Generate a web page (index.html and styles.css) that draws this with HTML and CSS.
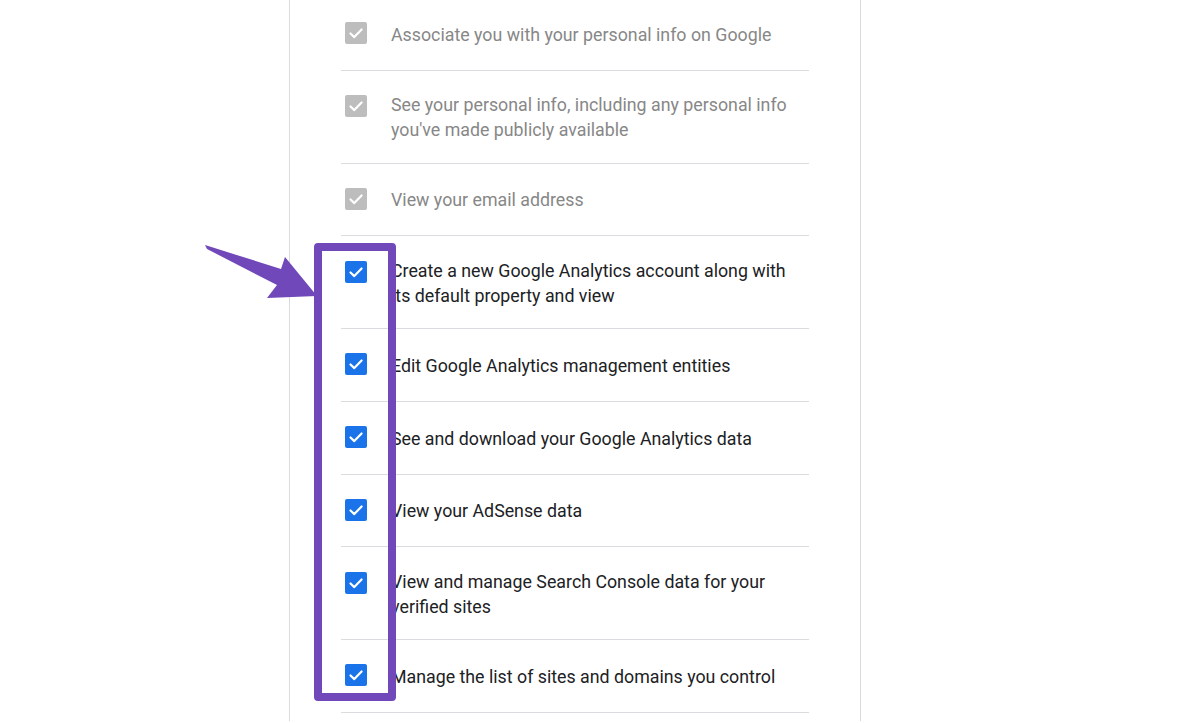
FILE: index.html
```html
<!DOCTYPE html>
<html lang="en">

<head>
    <meta charset="UTF-8">
    <meta name="viewport" content="width=device-width, initial-scale=1.0">
    <title>Permissions</title>
    <link rel="stylesheet" href="styles.css">
</head>

<body>
    <div class="card">
        <ul class="scopes">
            <li class="scope granted">
                <span class="box"><svg viewBox="0 0 22 22"><path d="M5.5 11.5l3.8 3.6 7.3-7.6" /></svg></span>
                <span class="label">Associate you with your personal info on Google</span>
            </li>
            <li class="scope granted">
                <span class="box"><svg viewBox="0 0 22 22"><path d="M5.5 11.5l3.8 3.6 7.3-7.6" /></svg></span>
                <span class="label">See your personal info, including any personal info you've made publicly available</span>
            </li>
            <li class="scope granted">
                <span class="box"><svg viewBox="0 0 22 22"><path d="M5.5 11.5l3.8 3.6 7.3-7.6" /></svg></span>
                <span class="label">View your email address</span>
            </li>
            <li class="scope">
                <span class="box"><svg viewBox="0 0 22 22"><path d="M5.5 11.5l3.8 3.6 7.3-7.6" /></svg></span>
                <span class="label">Create a new Google Analytics account along with its default property and view</span>
            </li>
            <li class="scope">
                <span class="box"><svg viewBox="0 0 22 22"><path d="M5.5 11.5l3.8 3.6 7.3-7.6" /></svg></span>
                <span class="label">Edit Google Analytics management entities</span>
            </li>
            <li class="scope">
                <span class="box"><svg viewBox="0 0 22 22"><path d="M5.5 11.5l3.8 3.6 7.3-7.6" /></svg></span>
                <span class="label">See and download your Google Analytics data</span>
            </li>
            <li class="scope">
                <span class="box"><svg viewBox="0 0 22 22"><path d="M5.5 11.5l3.8 3.6 7.3-7.6" /></svg></span>
                <span class="label">View your AdSense data</span>
            </li>
            <li class="scope">
                <span class="box"><svg viewBox="0 0 22 22"><path d="M5.5 11.5l3.8 3.6 7.3-7.6" /></svg></span>
                <span class="label">View and manage Search Console data for your verified sites</span>
            </li>
            <li class="scope">
                <span class="box"><svg viewBox="0 0 22 22"><path d="M5.5 11.5l3.8 3.6 7.3-7.6" /></svg></span>
                <span class="label">Manage the list of sites and domains you control</span>
            </li>
        </ul>
    </div>

    <!-- annotation drawn on top of the screenshot -->
    <div class="highlight"></div>
    <svg class="arrow" viewBox="0 0 120 60" width="120" height="60">
        <path d="M0 4 L76 28 L80 16 L112 55 L62 57 L72 44 L2 8 Z" />
    </svg>
</body>

</html>
```

FILE: styles.css
```css
body {
    margin: 0;
    background: #fff;
    font-family: Roboto, "Liberation Sans", sans-serif;
    overflow: hidden;
}

.card {
    width: 468px;
    margin-left: 289px;
    padding: 0 51px;
    border-left: 1px solid #dadce0;
    border-right: 1px solid #dadce0;
    min-height: 723px;
}

.scopes {
    list-style: none;
    margin: -2px 0 0;
    padding: 0;
}

.scope {
    display: flex;
    align-items: flex-start;
    padding: 21.25px 0 20.5px;
    border-bottom: 1px solid #dadce0;
    font-size: 17.8px;
    line-height: 25px;
    color: #202124;
}

.scope .box {
    flex: none;
    width: 22px;
    height: 22px;
    margin: 3px 24px 0 4px;
    border-radius: 2px;
    background: #1a73e8;
}

.scope .box svg {
    display: block;
    width: 22px;
    height: 22px;
    fill: none;
    stroke: #fff;
    stroke-width: 2.2;
    stroke-linecap: round;
    stroke-linejoin: round;
}

.scope .label {
    display: flex;
    align-items: center;
    min-height: 30px;
}

.scope.granted {
    color: #878787;
}

.scope.granted .box {
    background: #bdbdbd;
}

.highlight {
    position: absolute;
    left: 314px;
    top: 243px;
    width: 66px;
    height: 442px;
    border: 8.5px solid #7048b9;
    border-radius: 4px;
}

.arrow {
    position: absolute;
    left: 205px;
    top: 241px;
    fill: #7048b9;
}
```
